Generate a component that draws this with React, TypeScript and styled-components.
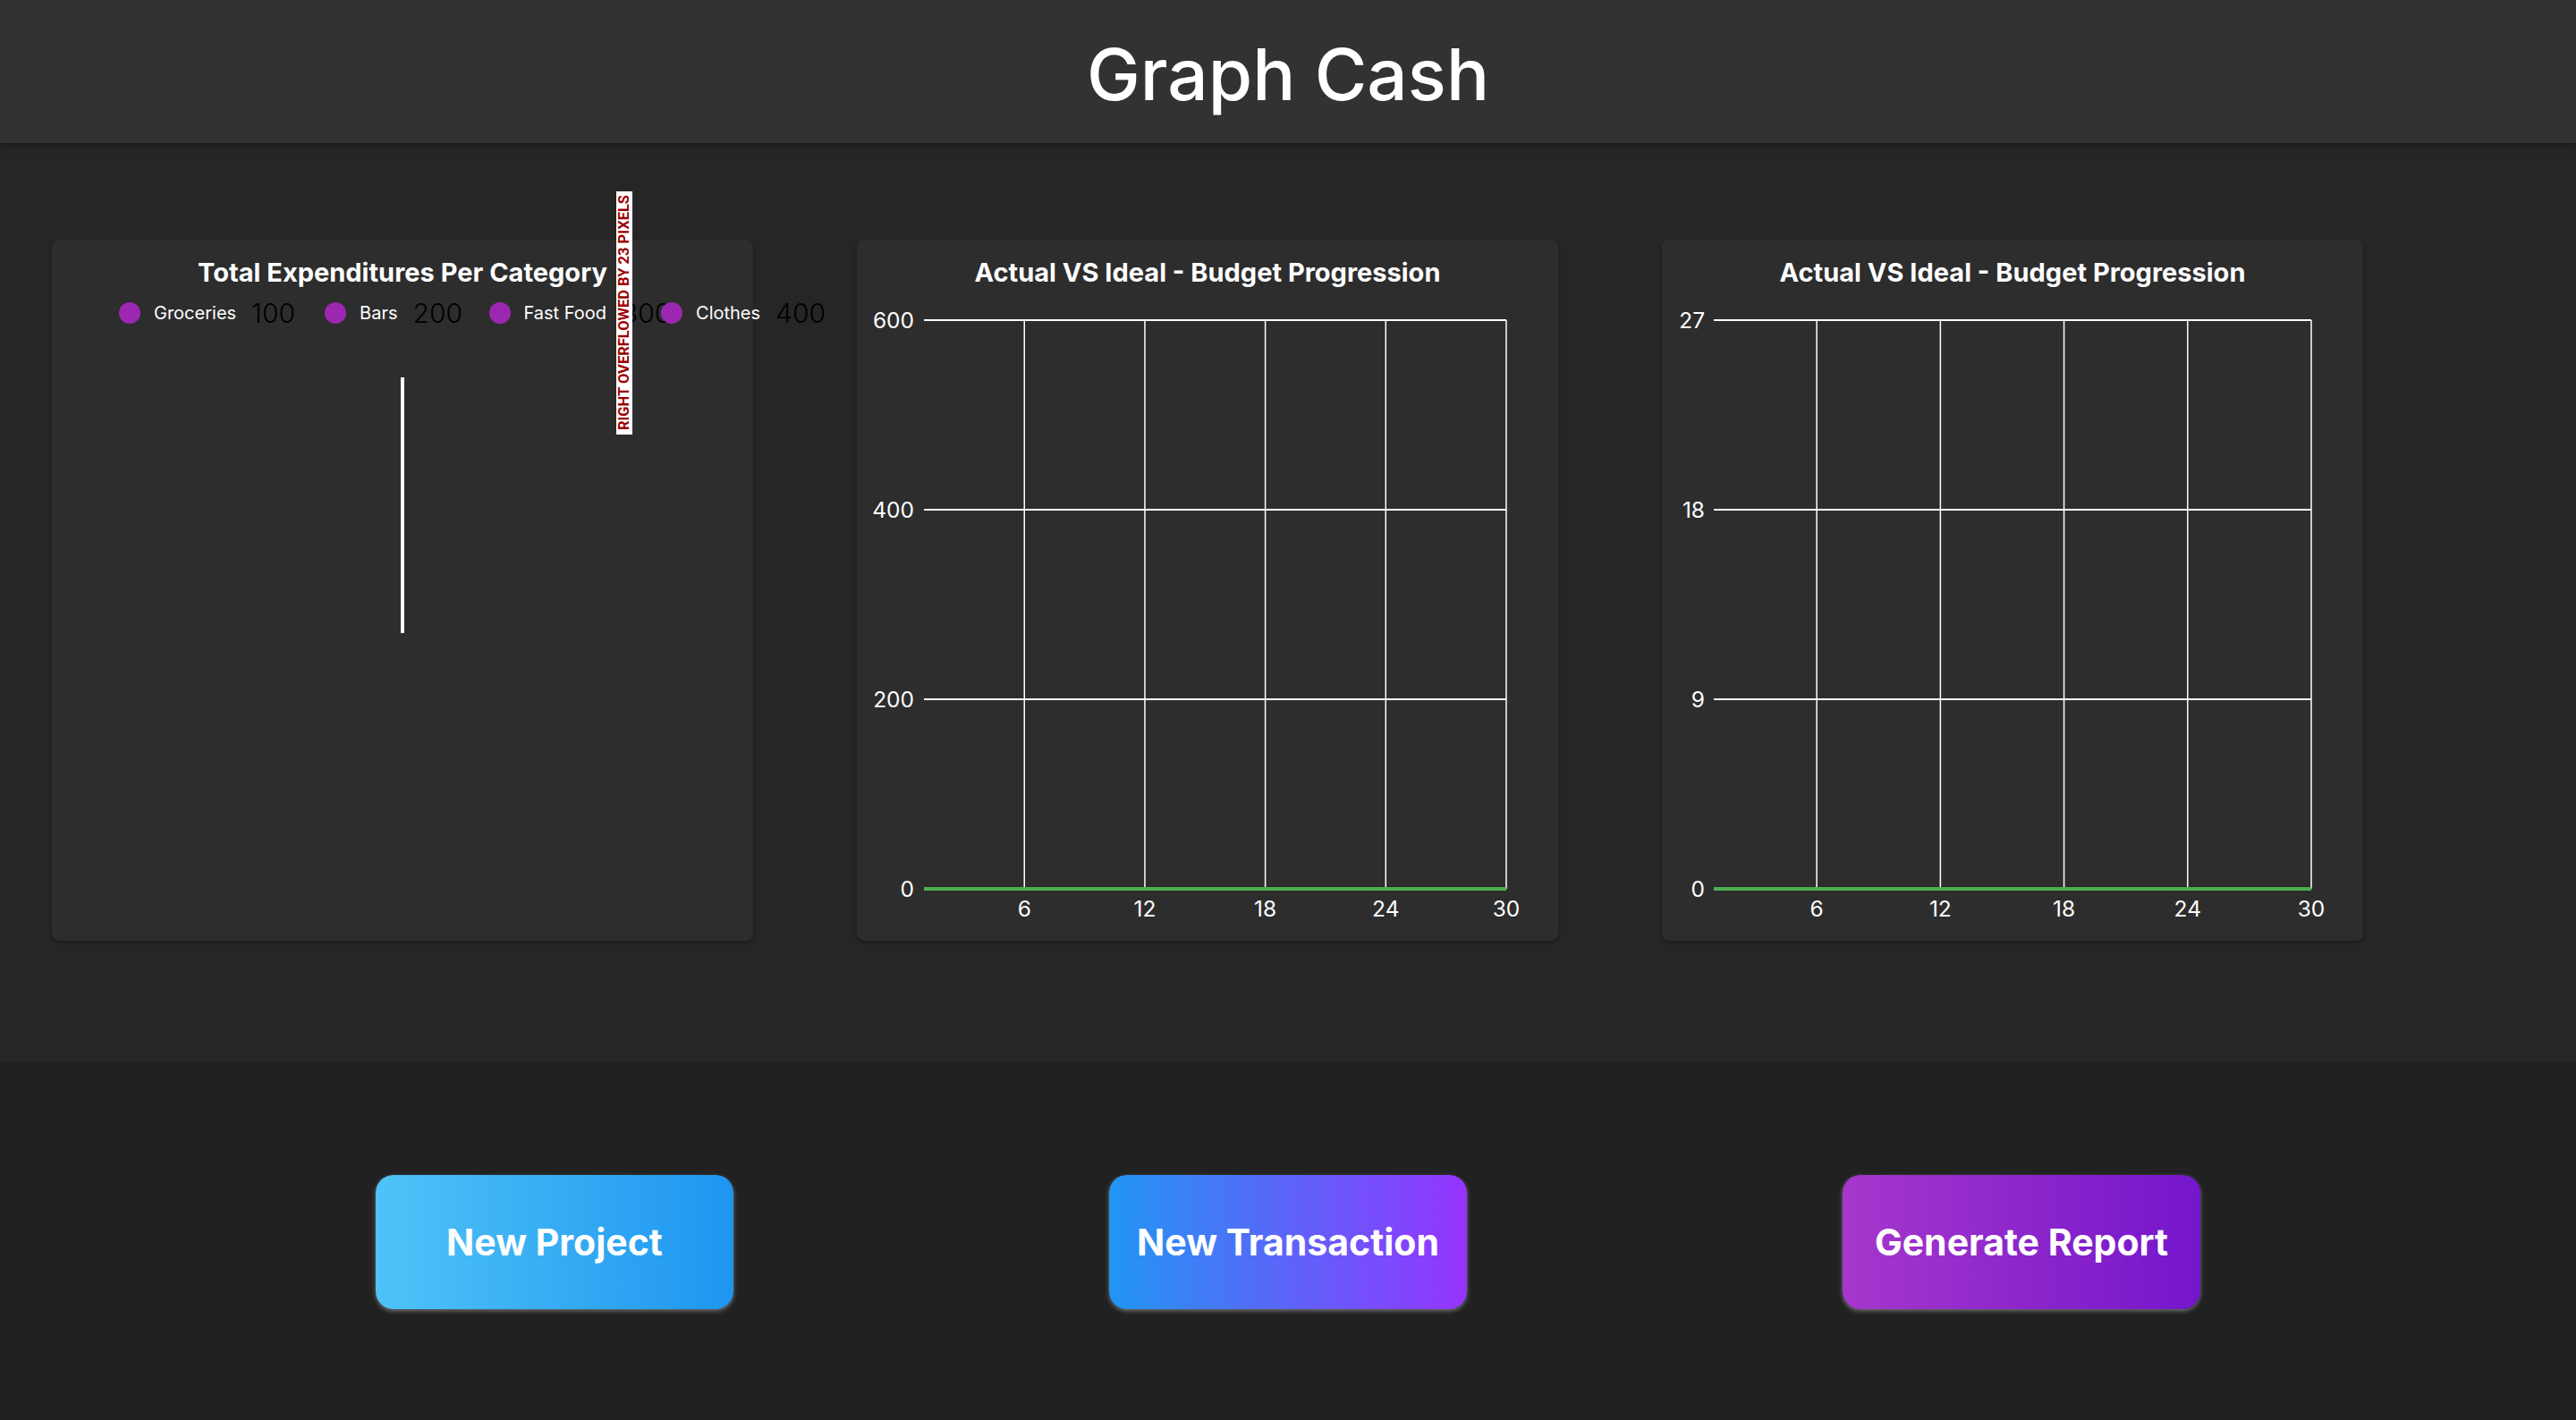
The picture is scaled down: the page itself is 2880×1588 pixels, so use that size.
import React from "react";
import styled, { createGlobalStyle } from "styled-components";

const GlobalStyle = createGlobalStyle`
  html, body { margin: 0; padding: 0; background: #212121; }
  body { font-family: Inter, "Noto Sans", sans-serif; }
  * { box-sizing: border-box; }
`;

const Page = styled.div`
  display: flex;
  flex-direction: column;
  min-height: 100vh;
`;

const Header = styled.header`
  height: 160px;
  background: #323232;
  display: flex;
  align-items: center;
  justify-content: center;
  padding-top: 6px;
  box-shadow: 0 3px 8px rgba(0, 0, 0, 0.35);
  position: relative;
  z-index: 1;
`;

const AppTitle = styled.h1`
  margin: 0;
  font-family: Inter, sans-serif;
  font-weight: 500;
  font-size: 80px;
  line-height: 1.2;
  color: #ffffff;
`;

const ChartsArea = styled.section`
  height: 1028px;
  background: #262626;
  display: flex;
  align-items: flex-start;
  gap: 116px;
  padding: 108px 0 0 58px;
`;

const Card = styled.div`
  position: relative;
  width: 784px;
  height: 784px;
  background: #2d2d2d;
  border-radius: 8px;
  box-shadow: 0 2px 4px rgba(0, 0, 0, 0.3);
  padding: 19px 16px 0;
  display: flex;
  flex-direction: column;
  align-items: center;
`;

const CardTitle = styled.h2`
  margin: 0;
  font-family: Inter, sans-serif;
  font-weight: 700;
  font-size: 29px;
  line-height: 35px;
  color: #ffffff;
  text-align: center;
`;

const Legend = styled.div`
  align-self: flex-start;
  margin: 14px 0 0 59px;
  height: 28px;
  display: flex;
  align-items: center;
  white-space: nowrap;
`;

const LegendDot = styled.span`
  width: 24px;
  height: 24px;
  border-radius: 50%;
  background: #9c27b0;
  flex: none;
  margin-right: 15px;
  position: relative;
  z-index: 1;
`;

const LegendLabel = styled.span`
  font-size: 20px;
  color: #ffffff;
  margin-right: 17px;
`;

const LegendValue = styled.span<{ $after: number }>`
  width: 50px;
  font-size: 30px;
  font-weight: 300;
  color: #000000;
  margin-right: ${(p) => p.$after}px;
  flex: none;
`;

const BarLine = styled.div`
  width: 4px;
  height: 286px;
  margin-top: 58px;
  background: #ffffff;
`;

const OverflowBanner = styled.div`
  position: absolute;
  left: 631px;
  top: -54px;
  width: 18px;
  height: 272px;
  background: #ffffff;
  display: flex;
  align-items: center;
  justify-content: center;
  overflow: hidden;
  z-index: 2;
`;

const OverflowText = styled.span`
  writing-mode: vertical-rl;
  transform: rotate(180deg);
  font-family: Roboto, "Liberation Sans", sans-serif;
  font-weight: 700;
  font-size: 16.5px;
  line-height: 18px;
  color: #9b0000;
  white-space: nowrap;
`;

const ChartSvg = styled.svg`
  margin-top: 18px;
  align-self: stretch;
  display: block;
  overflow: visible;
`;

const ActionsBar = styled.section`
  flex: 1;
  background: #212121;
  display: flex;
  justify-content: space-evenly;
  align-items: center;
  padding-top: 2px;
`;

const ActionButton = styled.button<{ $from: string; $to: string }>`
  width: 400px;
  height: 150px;
  border: none;
  border-radius: 20px;
  background: linear-gradient(to right, ${(p) => p.$from}, ${(p) => p.$to});
  color: #ffffff;
  font-family: Inter, sans-serif;
  font-weight: 700;
  font-size: 41px;
  box-shadow: 0 2px 5px rgba(170, 170, 170, 0.6);
  cursor: pointer;
`;

type ChartProps = {
  yLabels: string[];
  labelRight: number;
  plotLeft: number;
};

const PLOT_RIGHT = 710;
const GRID_Y = [18, 230, 442, 654];
const X_TICKS = [6, 12, 18, 24, 30];

function LineChart({ yLabels, labelRight, plotLeft }: ChartProps) {
  const xOf = (v: number) => plotLeft + ((v - 1) / 29) * (PLOT_RIGHT - plotLeft);
  return (
    <ChartSvg width={752} height={700} viewBox="0 0 752 700">
      {GRID_Y.slice(0, 3).map((y) => (
        <line key={y} x1={plotLeft} x2={PLOT_RIGHT} y1={y} y2={y} stroke="#ffffff" strokeWidth={2} />
      ))}
      {X_TICKS.map((t) => (
        <line key={t} x1={xOf(t)} x2={xOf(t)} y1={GRID_Y[0]} y2={GRID_Y[3]} stroke="#ffffff" strokeWidth={1.5} />
      ))}
      <line x1={plotLeft} x2={PLOT_RIGHT} y1={GRID_Y[3]} y2={GRID_Y[3]} stroke="#4caf50" strokeWidth={4} />
      {yLabels.map((l, i) => (
        <text
          key={l}
          x={labelRight}
          y={GRID_Y[i] + 9}
          textAnchor="end"
          fill="#ffffff"
          fontFamily="Inter, sans-serif"
          fontSize={24.5}
        >
          {l}
        </text>
      ))}
      {X_TICKS.map((t) => (
        <text
          key={t}
          x={xOf(t)}
          y={685}
          textAnchor="middle"
          fill="#ffffff"
          fontFamily="Inter, sans-serif"
          fontSize={24.5}
        >
          {t}
        </text>
      ))}
    </ChartSvg>
  );
}

const legendItems = [
  { label: "Groceries", value: "100", after: 32 },
  { label: "Bars", value: "200", after: 35 },
  { label: "Fast Food", value: "300", after: -6 },
  { label: "Clothes", value: "400", after: 0 },
];

export default function App() {
  return (
    <Page>
      <GlobalStyle />
      <Header>
        <AppTitle>Graph Cash</AppTitle>
      </Header>
      <ChartsArea>
        <Card>
          <CardTitle>Total Expenditures Per Category</CardTitle>
          <Legend>
            {legendItems.map((it) => (
              <React.Fragment key={it.label}>
                <LegendDot />
                <LegendLabel>{it.label}</LegendLabel>
                <LegendValue $after={it.after}>{it.value}</LegendValue>
              </React.Fragment>
            ))}
          </Legend>
          <BarLine />
          <OverflowBanner>
            <OverflowText>RIGHT OVERFLOWED BY 23 PIXELS</OverflowText>
          </OverflowBanner>
        </Card>
        <Card>
          <CardTitle>Actual VS Ideal - Budget Progression</CardTitle>
          <LineChart yLabels={["600", "400", "200", "0"]} labelRight={48} plotLeft={59} />
        </Card>
        <Card>
          <CardTitle>Actual VS Ideal - Budget Progression</CardTitle>
          <LineChart yLabels={["27", "18", "9", "0"]} labelRight={32} plotLeft={42} />
        </Card>
      </ChartsArea>
      <ActionsBar>
        <ActionButton $from="#4fc3f7" $to="#1e96f0">New Project</ActionButton>
        <ActionButton $from="#2196f3" $to="#9633ff">New Transaction</ActionButton>
        <ActionButton $from="#a637cb" $to="#7416cc">Generate Report</ActionButton>
      </ActionsBar>
    </Page>
  );
}
